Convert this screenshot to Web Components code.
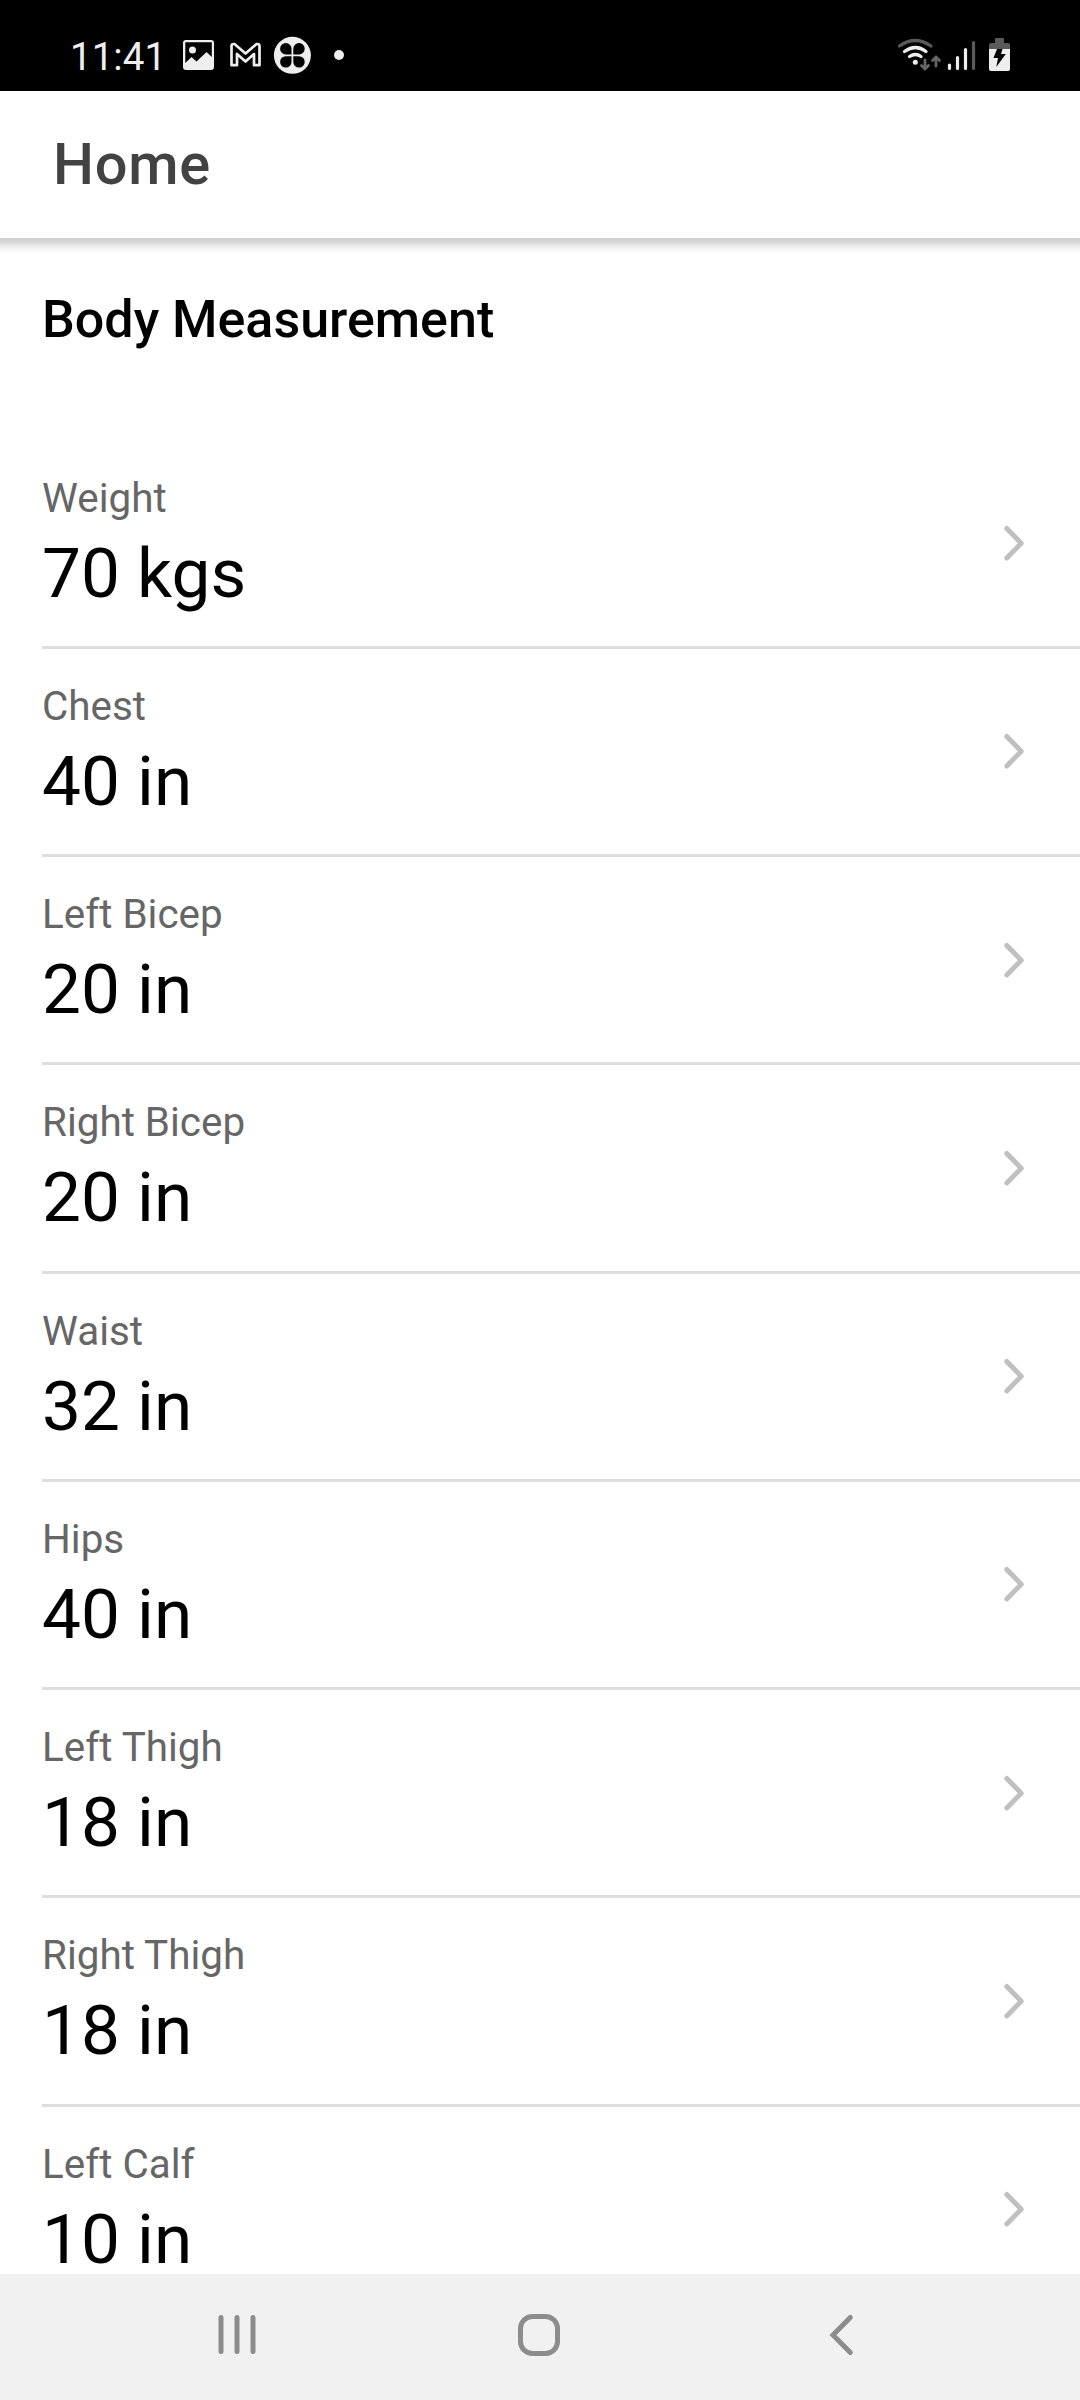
<!DOCTYPE html>
<html lang="en">
<head>
<meta charset="utf-8">
<title>Home</title>
<style>
    body {
        margin: 0;
        background: #fff;
        font-family: Roboto, sans-serif;
    }
</style>
</head>
<body>
<phone-screen>
    <status-bar slot="top" time="11:41"></status-bar>
    <app-toolbar slot="top">Home</app-toolbar>
    <list-title>Body Measurement</list-title>
    <measure-item label="Weight">70 kgs</measure-item>
    <measure-item label="Chest">40 in</measure-item>
    <measure-item label="Left Bicep">20 in</measure-item>
    <measure-item label="Right Bicep">20 in</measure-item>
    <measure-item label="Waist">32 in</measure-item>
    <measure-item label="Hips">40 in</measure-item>
    <measure-item label="Left Thigh">18 in</measure-item>
    <measure-item label="Right Thigh">18 in</measure-item>
    <measure-item label="Left Calf">10 in</measure-item>
    <nav-bar slot="bottom"></nav-bar>
</phone-screen>

<script>
    // attaches an open shadow root with the given markup
    function buildShadowRoot(html, elem) {
        const template = document.createElement('template');
        template.innerHTML = html;
        elem.attachShadow({ mode: 'open' }).appendChild(template.content.cloneNode(true));
    }

    class PhoneScreen extends HTMLElement {
        constructor() {
            super();
            buildShadowRoot(`
                <style>
                    :host {
                        display: flex;
                        flex-direction: column;
                        width: 1080px;
                        height: 2400px;
                        overflow: hidden;
                    }
                    main {
                        flex: 1;
                        min-height: 0;
                        overflow: hidden;
                    }
                </style>
                <slot name="top"></slot>
                <main><slot></slot></main>
                <slot name="bottom"></slot>
            `, this);
        }
    }

    class StatusBar extends HTMLElement {
        constructor() {
            super();
            buildShadowRoot(`
                <style>
                    :host {
                        display: flex;
                        flex: none;
                        justify-content: space-between;
                        height: 91px;
                        background: #000;
                        color: #eee;
                    }
                    .left { display: flex; padding-left: 70px; }
                    .time {
                        width: 100px;
                        font-size: 38.6px;
                        line-height: 113px;
                        white-space: nowrap;
                    }
                    svg { display: block; flex: none; }
                </style>
                <div class="left">
                    <span class="time"></span>
                    <svg width="190" height="91" viewBox="170 0 190 91">
                        <path fill="#eee" fill-rule="evenodd" d="M186 40h25a3 3 0 0 1 3 3v24a3 3 0 0 1-3 3h-25a3 3 0 0 1-3-3V43a3 3 0 0 1 3-3zM185.300 42.300v20.700l6.200-6 5 4.500 10-9.500 5.300 5V42.300z"/>
                        <circle cx="192.500" cy="50" r="3.500" fill="#eee"/>
                        <path fill="none" stroke="#eee" stroke-width="2.700" stroke-linejoin="round" d="M231.500 65.200V46q0-2 2-2h1l11 9.500 11-9.500h1q2 0 2 2v19.200h-5.500V54l-8.500 7.500-8.500-7.500v11.200z"/>
                        <circle cx="292.400" cy="55.300" r="18.500" fill="#eee"/>
                        <g fill="#000">
                            <path d="M291.500 54.400h-5.700a5.700 5.700 0 1 1 5.700-5.700z"/>
                            <path d="M293.300 54.400h5.700a5.700 5.700 0 1 0-5.700-5.700z"/>
                            <path d="M291.500 56.200h-5.700a5.700 5.700 0 1 0 5.700 5.700z"/>
                            <path d="M293.300 56.200h5.700a5.700 5.700 0 1 1-5.700 5.700z"/>
                        </g>
                        <circle cx="339" cy="55" r="5" fill="#eee"/>
                    </svg>
                </div>
                <svg width="190" height="91" viewBox="890 0 190 91">
                    <g fill="none" stroke-width="3.200" stroke-linecap="round">
                        <path stroke="#5a5a5a" d="M899.500 46q15.500-11 31.500 0"/>
                        <path stroke="#eee" d="M904.500 51.500q11-8 21.500 0M909.500 56.500q6-4 11.500 0"/>
                        <path stroke="#666" stroke-width="2.800" d="M925 60v8.500M921.500 65.500l3.500 3.500 3.500-3.500M936 66v-8.500M932.500 60.500l3.500-3.500 3.500 3.500"/>
                        <path stroke="#eee" d="M949.500 65v3.500M957.500 57.500v11M965.500 49.500v19"/>
                        <path stroke="#5a5a5a" d="M973.500 42.500v26"/>
                    </g>
                    <circle cx="915.300" cy="62.300" r="2.500" fill="#eee"/>
                    <path fill="#5a5a5a" d="M989 49v-4q0-2 2-2h4v-4q0-1 1-1h7q1 0 1 1v4h4q2 0 2 2v4z"/>
                    <path fill="#eee" d="M989 49h21v20q0 2-2 2h-17q-2 0-2-2z"/>
                    <path d="M997 49h5.500l-1.500 5h4.800l-9.500 13 1.700-9h-4.500z"/>
                </svg>
            `, this);
        }
        connectedCallback() {
            this.shadowRoot.querySelector('.time').textContent = this.getAttribute('time');
        }
    }

    class AppToolbar extends HTMLElement {
        constructor() {
            super();
            buildShadowRoot(`
                <style>
                    :host {
                        display: block;
                        flex: none;
                        height: 147px;
                        background: #fff;
                        color: #424242;
                        font-size: 57.75px;
                        font-weight: 500;
                        letter-spacing: 0.72px;
                        line-height: 147px;
                    }
                    .title { padding-left: 53px; }
                    .shadow {
                        height: 15px;
                        background: linear-gradient(#d0d0d0, #d6d6d6 25%, #f3f3f3 65%, #fff);
                    }
                </style>
                <div class="title"><slot></slot></div>
                <div class="shadow"></div>
            `, this);
        }
    }

    class ListTitle extends HTMLElement {
        constructor() {
            super();
            buildShadowRoot(`
                <style>
                    :host {
                        display: block;
                        height: 202.5px;
                        padding-left: 42px;
                        box-sizing: border-box;
                        color: #000;
                        font-size: 52px;
                        font-weight: 500;
                        line-height: 163px;
                    }
                </style>
                <slot></slot>
            `, this);
        }
    }

    class MeasureItem extends HTMLElement {
        constructor() {
            super();
            buildShadowRoot(`
                <style>
                    :host {
                        display: flex;
                        align-items: center;
                        justify-content: space-between;
                        box-sizing: border-box;
                        height: 208.25px;
                        margin-left: 42px;
                        border-bottom: 3px solid #dedede;
                    }
                    .text { align-self: flex-start; padding-top: 34px; }
                    .label {
                        color: #666;
                        font-size: 40.4px;
                        line-height: 47px;
                    }
                    .value {
                        margin-top: 10px;
                        color: #000;
                        font-size: 69.3px;
                        line-height: 84px;
                    }
                    svg { margin-right: 52px; }
                </style>
                <div class="text">
                    <div class="label"></div>
                    <div class="value"><slot></slot></div>
                </div>
                <svg width="28" height="40" viewBox="0 0 28 40">
                    <path fill="none" stroke="#c0c0c0" stroke-width="5" stroke-linecap="round" stroke-linejoin="round" d="M6.800 5.500 21.200 20.200 6.800 34.900"/>
                </svg>
            `, this);
        }
        static get observedAttributes() {
            return ['label'];
        }
        attributeChangedCallback(attrName, oldVal, newVal) {
            this.shadowRoot.querySelector('.label').textContent = newVal;
        }
    }

    class NavBar extends HTMLElement {
        constructor() {
            super();
            buildShadowRoot(`
                <style>
                    :host {
                        display: flex;
                        flex: none;
                        align-items: center;
                        justify-content: space-between;
                        box-sizing: border-box;
                        height: 126px;
                        padding: 0 209px 0 207px;
                        background: #f1f1f1;
                    }
                    svg {
                        fill: none;
                        stroke: #8c8c8c;
                        stroke-width: 5;
                        stroke-linecap: round;
                        stroke-linejoin: round;
                    }
                </style>
                <svg width="60" height="60"><path d="M14 10.500v34M30 10.500v34M46 10.500v34"/></svg>
                <svg width="60" height="60"><rect x="11.500" y="9.500" width="37" height="37" rx="12"/></svg>
                <svg width="60" height="60"><path stroke-linejoin="miter" d="M39.300 10.500 22 28 39.300 45.500"/></svg>
            `, this);
        }
    }

    customElements.define('phone-screen', PhoneScreen);
    customElements.define('status-bar', StatusBar);
    customElements.define('app-toolbar', AppToolbar);
    customElements.define('list-title', ListTitle);
    customElements.define('measure-item', MeasureItem);
    customElements.define('nav-bar', NavBar);
</script>
</body>
</html>
